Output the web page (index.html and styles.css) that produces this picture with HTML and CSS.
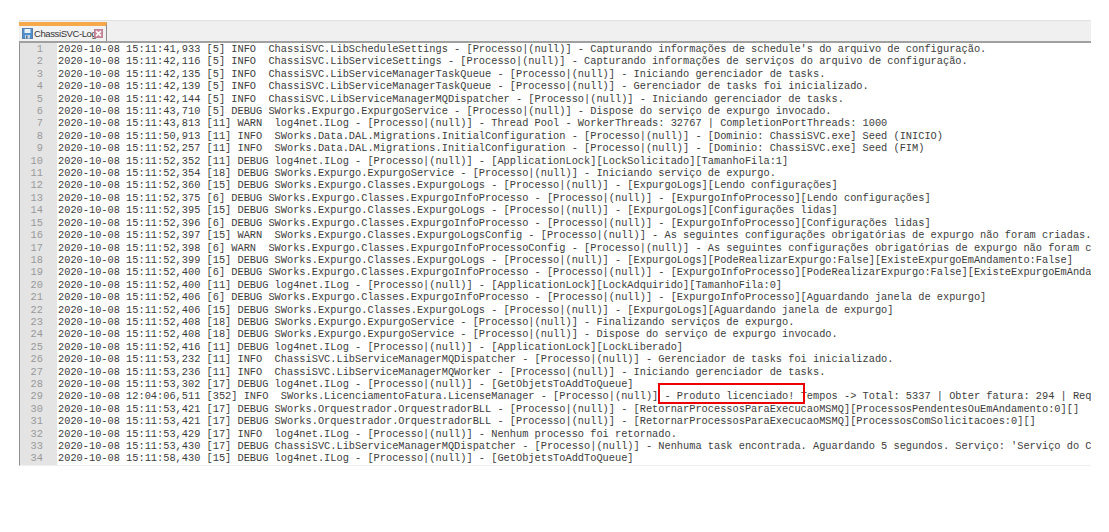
FILE: index.html
```html
<!DOCTYPE html>
<html lang="pt">
<head>
<meta charset="utf-8">
<title>ChassiSVC-Log</title>
<link rel="stylesheet" href="styles.css">
</head>
<body>
<div class="window">
  <div class="tabbar">
    <div class="tab">
      <svg class="save" width="11" height="11" viewBox="0 0 11 11">
        <rect x="0.5" y="0.5" width="10" height="10" fill="#4f8fd0" stroke="#5a7fa8"/>
        <rect x="2.5" y="1" width="6" height="4" fill="#e8f1fa"/>
        <rect x="3" y="7" width="5" height="3.5" fill="#c9d6e2"/>
        <rect x="4" y="7.5" width="1.5" height="3" fill="#4f6f90"/>
      </svg>
      <span class="tabname">ChassiSVC-Log</span>
      <svg class="close" width="9" height="9" viewBox="0 0 10 10">
        <rect x="0" y="0" width="10" height="10" fill="#c98a9c" stroke="#b07088" stroke-width="0.6"/>
        <path d="M2.3 2.3 L7.7 7.7 M7.7 2.3 L2.3 7.7" stroke="#fff" stroke-width="1.8"/>
      </svg>
    </div>
  </div>
  <div class="editor">
    <div class="row"><span class="num">1</span><span class="txt">2020-10-08 15:11:41,933 [5] INFO  ChassiSVC.LibScheduleSettings - [Processo|(null)] - Capturando informações de schedule's do arquivo de configuração.</span></div>
    <div class="row"><span class="num">2</span><span class="txt">2020-10-08 15:11:42,116 [5] INFO  ChassiSVC.LibServiceSettings - [Processo|(null)] - Capturando informações de serviços do arquivo de configuração.</span></div>
    <div class="row"><span class="num">3</span><span class="txt">2020-10-08 15:11:42,135 [5] INFO  ChassiSVC.LibServiceManagerTaskQueue - [Processo|(null)] - Iniciando gerenciador de tasks.</span></div>
    <div class="row"><span class="num">4</span><span class="txt">2020-10-08 15:11:42,139 [5] INFO  ChassiSVC.LibServiceManagerTaskQueue - [Processo|(null)] - Gerenciador de tasks foi inicializado.</span></div>
    <div class="row"><span class="num">5</span><span class="txt">2020-10-08 15:11:42,144 [5] INFO  ChassiSVC.LibServiceManagerMQDispatcher - [Processo|(null)] - Iniciando gerenciador de tasks.</span></div>
    <div class="row"><span class="num">6</span><span class="txt">2020-10-08 15:11:43,710 [5] DEBUG SWorks.Expurgo.ExpurgoService - [Processo|(null)] - Dispose do serviço de expurgo invocado.</span></div>
    <div class="row"><span class="num">7</span><span class="txt">2020-10-08 15:11:43,813 [11] WARN  log4net.ILog - [Processo|(null)] - Thread Pool - WorkerThreads: 32767 | CompletionPortThreads: 1000</span></div>
    <div class="row"><span class="num">8</span><span class="txt">2020-10-08 15:11:50,913 [11] INFO  SWorks.Data.DAL.Migrations.InitialConfiguration - [Processo|(null)] - [Dominio: ChassiSVC.exe] Seed (INICIO)</span></div>
    <div class="row"><span class="num">9</span><span class="txt">2020-10-08 15:11:52,257 [11] INFO  SWorks.Data.DAL.Migrations.InitialConfiguration - [Processo|(null)] - [Dominio: ChassiSVC.exe] Seed (FIM)</span></div>
    <div class="row"><span class="num">10</span><span class="txt">2020-10-08 15:11:52,352 [11] DEBUG log4net.ILog - [Processo|(null)] - [ApplicationLock][LockSolicitado][TamanhoFila:1]</span></div>
    <div class="row"><span class="num">11</span><span class="txt">2020-10-08 15:11:52,354 [18] DEBUG SWorks.Expurgo.ExpurgoService - [Processo|(null)] - Iniciando serviço de expurgo.</span></div>
    <div class="row"><span class="num">12</span><span class="txt">2020-10-08 15:11:52,360 [15] DEBUG SWorks.Expurgo.Classes.ExpurgoLogs - [Processo|(null)] - [ExpurgoLogs][Lendo configurações]</span></div>
    <div class="row"><span class="num">13</span><span class="txt">2020-10-08 15:11:52,375 [6] DEBUG SWorks.Expurgo.Classes.ExpurgoInfoProcesso - [Processo|(null)] - [ExpurgoInfoProcesso][Lendo configurações]</span></div>
    <div class="row"><span class="num">14</span><span class="txt">2020-10-08 15:11:52,395 [15] DEBUG SWorks.Expurgo.Classes.ExpurgoLogs - [Processo|(null)] - [ExpurgoLogs][Configurações lidas]</span></div>
    <div class="row"><span class="num">15</span><span class="txt">2020-10-08 15:11:52,396 [6] DEBUG SWorks.Expurgo.Classes.ExpurgoInfoProcesso - [Processo|(null)] - [ExpurgoInfoProcesso][Configurações lidas]</span></div>
    <div class="row"><span class="num">16</span><span class="txt">2020-10-08 15:11:52,397 [15] WARN  SWorks.Expurgo.Classes.ExpurgoLogsConfig - [Processo|(null)] - As seguintes configurações obrigatórias de expurgo não foram criadas.</span></div>
    <div class="row"><span class="num">17</span><span class="txt">2020-10-08 15:11:52,398 [6] WARN  SWorks.Expurgo.Classes.ExpurgoInfoProcessoConfig - [Processo|(null)] - As seguintes configurações obrigatórias de expurgo não foram c</span></div>
    <div class="row"><span class="num">18</span><span class="txt">2020-10-08 15:11:52,399 [15] DEBUG SWorks.Expurgo.Classes.ExpurgoLogs - [Processo|(null)] - [ExpurgoLogs][PodeRealizarExpurgo:False][ExisteExpurgoEmAndamento:False]</span></div>
    <div class="row"><span class="num">19</span><span class="txt">2020-10-08 15:11:52,400 [6] DEBUG SWorks.Expurgo.Classes.ExpurgoInfoProcesso - [Processo|(null)] - [ExpurgoInfoProcesso][PodeRealizarExpurgo:False][ExisteExpurgoEmAnda</span></div>
    <div class="row"><span class="num">20</span><span class="txt">2020-10-08 15:11:52,400 [11] DEBUG log4net.ILog - [Processo|(null)] - [ApplicationLock][LockAdquirido][TamanhoFila:0]</span></div>
    <div class="row"><span class="num">21</span><span class="txt">2020-10-08 15:11:52,406 [6] DEBUG SWorks.Expurgo.Classes.ExpurgoInfoProcesso - [Processo|(null)] - [ExpurgoInfoProcesso][Aguardando janela de expurgo]</span></div>
    <div class="row"><span class="num">22</span><span class="txt">2020-10-08 15:11:52,406 [15] DEBUG SWorks.Expurgo.Classes.ExpurgoLogs - [Processo|(null)] - [ExpurgoLogs][Aguardando janela de expurgo]</span></div>
    <div class="row"><span class="num">23</span><span class="txt">2020-10-08 15:11:52,408 [18] DEBUG SWorks.Expurgo.ExpurgoService - [Processo|(null)] - Finalizando serviços de expurgo.</span></div>
    <div class="row"><span class="num">24</span><span class="txt">2020-10-08 15:11:52,408 [18] DEBUG SWorks.Expurgo.ExpurgoService - [Processo|(null)] - Dispose do serviço de expurgo invocado.</span></div>
    <div class="row"><span class="num">25</span><span class="txt">2020-10-08 15:11:52,416 [11] DEBUG log4net.ILog - [Processo|(null)] - [ApplicationLock][LockLiberado]</span></div>
    <div class="row"><span class="num">26</span><span class="txt">2020-10-08 15:11:53,232 [11] INFO  ChassiSVC.LibServiceManagerMQDispatcher - [Processo|(null)] - Gerenciador de tasks foi inicializado.</span></div>
    <div class="row"><span class="num">27</span><span class="txt">2020-10-08 15:11:53,236 [11] INFO  ChassiSVC.LibServiceManagerMQWorker - [Processo|(null)] - Iniciando gerenciador de tasks.</span></div>
    <div class="row"><span class="num">28</span><span class="txt">2020-10-08 15:11:53,302 [17] DEBUG log4net.ILog - [Processo|(null)] - [GetObjetsToAddToQueue]</span></div>
    <div class="row"><span class="num">29</span><span class="txt">2020-10-08 12:04:06,511 [352] INFO  SWorks.LicenciamentoFatura.LicenseManager - [Processo|(null)] <span class="mark">- Produto licenciado!</span> Tempos -&gt; Total: 5337 | Obter fatura: 294 | Req</span></div>
    <div class="row"><span class="num">30</span><span class="txt">2020-10-08 15:11:53,421 [17] DEBUG SWorks.Orquestrador.OrquestradorBLL - [Processo|(null)] - [RetornarProcessosParaExecucaoMSMQ][ProcessosPendentesOuEmAndamento:0][]</span></div>
    <div class="row"><span class="num">31</span><span class="txt">2020-10-08 15:11:53,421 [17] DEBUG SWorks.Orquestrador.OrquestradorBLL - [Processo|(null)] - [RetornarProcessosParaExecucaoMSMQ][ProcessosComSolicitacoes:0][]</span></div>
    <div class="row"><span class="num">32</span><span class="txt">2020-10-08 15:11:53,429 [17] INFO  log4net.ILog - [Processo|(null)] - Nenhum processo foi retornado.</span></div>
    <div class="row"><span class="num">33</span><span class="txt">2020-10-08 15:11:53,430 [17] DEBUG ChassiSVC.LibServiceManagerMQDispatcher - [Processo|(null)] - Nenhuma task encontrada. Aguardando 5 segundos. Serviço: 'Serviço do C</span></div>
    <div class="row"><span class="num">34</span><span class="txt">2020-10-08 15:11:58,430 [15] DEBUG log4net.ILog - [Processo|(null)] - [GetObjetsToAddToQueue]</span></div>
  </div>
</div>
</body>
</html>
```
FILE: styles.css
```css
html, body {
  margin: 0;
  padding: 0;
  background: #fff;
}
body {
  width: 1109px;
  height: 532px;
  overflow: hidden;
  padding: 20px 18px 0 19px;
  box-sizing: border-box;
}
.window {
  width: 1072px;
}
.tabbar {
  height: 23px;
  box-sizing: border-box;
  background: #f0f0f0;
  border-top: 1px solid #e2e2e2;
  border-bottom: 2px solid #a0a0a0;
  display: flex;
}
.tab {
  width: 88px;
  margin-top: 1px;
  box-sizing: border-box;
  background: #f2f2f2;
  border-top: 4px solid #f5a94b;
  border-right: 1px solid #8c8c8c;
  display: flex;
  align-items: center;
  padding-left: 3px;
  gap: 1px;
}
.save {
  flex: none;
}
.tabname {
  font-family: "Liberation Sans", sans-serif;
  font-size: 9.5px;
  letter-spacing: -0.4px;
  color: #333;
  width: 58px;
  white-space: nowrap;
}
.close {
  flex: none;
  margin-left: 1px;
}
.editor {
  background: #fff;
  border-left: 1px solid #909090;
  border-bottom: 1px solid #efefef;
  overflow: hidden;
}
.row {
  display: flex;
  height: 12.41px;
  line-height: 12.41px;
  font-family: "Liberation Mono", monospace;
  font-size: 10.32px;
  white-space: pre;
}
.num {
  flex: none;
  width: 37px;
  box-sizing: border-box;
  padding-right: 14px;
  text-align: right;
  background: #e4e4e4;
  color: #999;
}
.txt {
  flex: 1;
  min-width: 0;
  padding-left: 1px;
  color: #3c3c3c;
}
.mark {
  position: relative;
}
.mark::after {
  content: "";
  position: absolute;
  left: -6px;
  right: -11px;
  top: -7px;
  bottom: -2px;
  border: 2px solid #ee0000;
}
```
